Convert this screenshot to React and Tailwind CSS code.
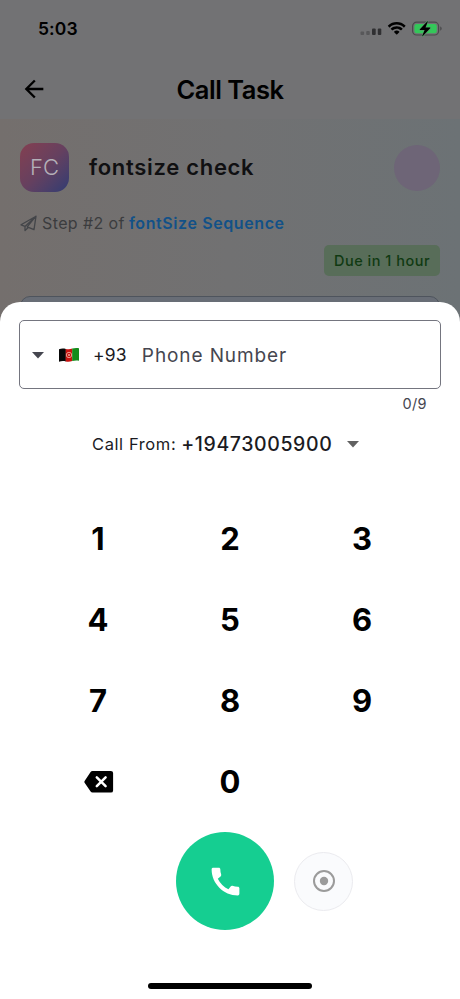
import { MdCall, MdArrowBack } from "react-icons/md";

const KEYS = ["1", "2", "3", "4", "5", "6", "7", "8", "9"];

const StatusIcons = () => (
  <svg width="84" height="18" viewBox="0 0 84 18">
    {/* signal */}
    <rect x="1.5" y="11.5" width="3.6" height="3.6" rx="1" fill="#58585a" />
    <rect x="7.2" y="11" width="3.6" height="4" rx="1" fill="#58585a" />
    <rect x="13" y="8.6" width="3.7" height="6.4" rx="1" fill="#303032" />
    <rect x="18.8" y="8.6" width="3.5" height="6.4" rx="1" fill="#303032" />
    {/* wifi */}
    <g transform="translate(28.5 1.7)" fill="#000">
      <path d="M9.2 2.9c2.7 0 5.1 1 6.9 2.8.15.14.38.14.53 0l1.3-1.3a.4.4 0 0 0 0-.57C13.1-.8 5.3-.8.5 3.83a.4.4 0 0 0 0 .57l1.3 1.3c.15.14.38.14.53 0C4.1 3.9 6.5 2.9 9.2 2.9Z" />
      <path d="M9.2 7.1c1.5 0 2.9.55 4 1.53.15.15.39.15.53 0l1.3-1.32a.4.4 0 0 0 0-.56c-3.3-3.1-8.4-3.1-11.7 0a.4.4 0 0 0 0 .56l1.3 1.32c.15.15.39.15.53 0a6 6 0 0 1 4.04-1.53Z" />
      <path d="M11.74 9.9a.4.4 0 0 1 0 .58L9.5 12.75a.38.38 0 0 1-.55 0L6.7 10.48a.4.4 0 0 1 0-.58 3.9 3.9 0 0 1 5.04 0Z" />
    </g>
    {/* battery */}
    <rect x="53.6" y="2.2" width="26" height="12.8" rx="4" fill="none" stroke="#49494b" strokeWidth="1.2" />
    <path d="M81.2 6.4v4.4c.9-.4 1.5-1.2 1.5-2.2s-.6-1.8-1.5-2.2Z" fill="#49494b" />
    <rect x="55.4" y="4" width="22.4" height="9.2" rx="2.3" fill="#33c759" />
    <path d="M68.2 1.5 60.9 9.3c-.3.4-.1.8.4.8h4.3l-2.3 5.7c-.1.6.2.7.6.3l7.3-7.8c.3-.4.1-.8-.4-.8h-4.3l2.3-5.7c.1-.6-.1-.7-.6-.3Z" fill="#000" stroke="#5b9c6c" strokeWidth="1.2" paintOrder="stroke" />
  </svg>
);

const AfghanFlag = () => (
  <svg width="20" height="16" viewBox="0 0 20 16">
    <path d="M0 2.2c2.3-.9 4.5-.9 6.9-.3v12.6c-2.4-.7-4.600-.5-6.900.2Z" fill="#080808" />
    <path d="M6.7 1.9c2.3.5 4.3.5 6.6-.3v12.5c-2.2.7-4.3.9-6.600.4Z" fill="#c9120f" />
    <path d="M13.2 1.600c2.300-.7 4.400-.9 6.800-.3v12.500c-2.400-.5-4.500-.3-6.800.3Z" fill="#158c1c" />
    <circle cx="10" cy="8" r="2.700" fill="none" stroke="#eb9a8c" strokeWidth="1" />
    <circle cx="10" cy="8" r="1.100" fill="#eea08f" />
  </svg>
);

const Caret = ({ className }) => (
  <svg width="12" height="7" viewBox="0 0 12 7" className={className}>
    <path d="M0 0h12L6 6.500Z" fill="currentColor" />
  </svg>
);

const PlaneIcon = () => (
  <svg width="17" height="17" viewBox="0 0 17 17" fill="none" stroke="#434549" strokeWidth="1.300" strokeLinejoin="round">
    <path d="M16 1.200 1 9.800l4 1.600L16 1.200Zm0 0-2 13.500-6.800-2.800L16 1.200ZM5 11.400v4.200l3.200-3.100" />
  </svg>
);

const BackspaceIcon = () => (
  <svg width="30" height="24" viewBox="0 0 30 24">
    <path d="M8.500.9h18.400a2.200 2.200 0 0 1 2.200 2.200v17.300a2.200 2.200 0 0 1-2.200 2.200H8.500c-.8 0-1.500-.4-1.900-1L.6 12.800c-.4-.6-.4-1.300 0-1.900l6-9c.4-.6 1.100-1 1.900-1Z" fill="#000" />
    <path d="m12.800 7.400 8.800 8.800m0-8.800-8.800 8.800" stroke="#fff" strokeWidth="2.500" strokeLinecap="round" />
  </svg>
);

const RecordIcon = () => (
  <svg width="24" height="24" viewBox="0 0 24 24">
    <circle cx="12" cy="12" r="10" fill="none" stroke="#9b9b9b" strokeWidth="2" />
    <circle cx="12" cy="12" r="4.200" fill="#9b9b9b" />
  </svg>
);

function TaskScreen() {
  return (
    <div className="h-[322px] bg-[#727274] overflow-hidden">
      <div className="flex h-[58px] items-center justify-between pl-[38px] pr-[17px]">
        <span className="text-[17.5px] font-semibold tracking-[0.1px]">5:03</span>
        <StatusIcons />
      </div>

      <header className="grid h-[61px] grid-cols-[46px_1fr_46px] items-center">
        <MdArrowBack size={28} className="ml-5" />
        <h1 className="pt-[3px] text-center text-[25.5px] font-semibold tracking-[-0.5px]">Call Task</h1>
      </header>

      <div className="h-[203px] bg-linear-to-r from-[#746f6d] via-[#717172] to-[#6c7275] px-5 pt-6">
        <div className="flex items-center">
          <div className="flex size-[49px] items-center justify-center rounded-[14px] bg-linear-to-br from-[#843f50] via-[#66405f] to-[#303b72] text-[22px] font-light text-[#b4b0b8]">
            FC
          </div>
          <h2 className="ml-5 flex-1 text-[22px] font-semibold tracking-[0.7px] text-[#101012]">fontsize check</h2>
          <div className="size-[46px] rounded-full bg-[#6e6577]" />
        </div>

        <div className="mt-[19px] flex h-6 items-center text-[16px] text-[#3b3c3e]">
          <PlaneIcon />
          <span className="ml-[5px] tracking-[0.4px]">Step #2 of</span>
          <span className="ml-1 font-semibold tracking-[0.6px] text-[#125188]">fontSize Sequence</span>
        </div>

        <div className="mt-[10px] flex justify-end">
          <span className="flex h-[31px] w-[116px] items-center justify-center rounded-[5px] bg-[#586d59] text-[14.5px] font-medium tracking-[0.5px] text-[#103a12]">
            Due in 1 hour
          </span>
        </div>

        <div className="mt-5 h-12 rounded-[10px] border border-[#4e545d] bg-[#686d76]" />
      </div>
    </div>
  );
}

export default function App() {
  return (
    <div className="mx-auto h-[999px] w-[460px] overflow-hidden bg-white font-['Inter',sans-serif] text-black">
      <TaskScreen />

      {/* Dialer sheet, slides over the task screen */}
      <div className="relative -mt-5 flex h-[697px] flex-col rounded-t-[20px] bg-white px-[19px] pt-[18px]">
        <div className="flex h-[69px] items-center rounded-[5px] border border-[#74757f] pt-px pl-3">
          <Caret className="text-[#45464f]" />
          <div className="ml-[15px]">
            <AfghanFlag />
          </div>
          <span className="ml-[14px] pt-px text-[17.5px] tracking-[0.2px] text-[#1b1b1f]">+93</span>
          <span className="ml-[15px] pt-[3px] text-[19px] tracking-[0.9px] text-[#45464f]">Phone Number</span>
        </div>
        <div className="flex h-[30px] items-center justify-end pr-[14px] text-[14.5px] tracking-[0.4px] text-[#45464f]">0/9</div>

        <div className="flex h-[50px] items-center pl-[73px] text-[#1b1b1f]">
          <span className="text-[16.5px] tracking-[0.6px]">Call From:</span>
          <span className="ml-[5px] pt-px text-[19.5px] font-medium tracking-[0.6px]">+19473005900</span>
          <Caret className="ml-[15px] text-[#616161]" />
        </div>

        <div className="mt-[30px] grid grid-cols-3 px-[13px] text-[31px] font-bold">
          {KEYS.map((key) => (
            <button key={key} className="flex h-[81px] items-center justify-center">
              {key}
            </button>
          ))}
          <button className="flex h-[81px] items-center justify-center pl-[2px] pb-[2px]" aria-label="Delete digit">
            <BackspaceIcon />
          </button>
          <button className="flex h-[81px] items-center justify-center">0</button>
        </div>

        <div className="mt-[9px] flex items-center pl-[157px]">
          <button className="flex size-[98px] items-center justify-center rounded-full bg-[#15ce91] text-white" aria-label="Call">
            <MdCall size={37} />
          </button>
          <button className="ml-5 flex size-[59px] items-center justify-center rounded-full border border-[#ebebef] bg-[#fafbfd]" aria-label="Record">
            <RecordIcon />
          </button>
        </div>

        {/* home indicator */}
        <div className="mt-auto mb-[10px] ml-[129px] h-[6px] w-[164px] rounded-full bg-black" />
      </div>
    </div>
  );
}
